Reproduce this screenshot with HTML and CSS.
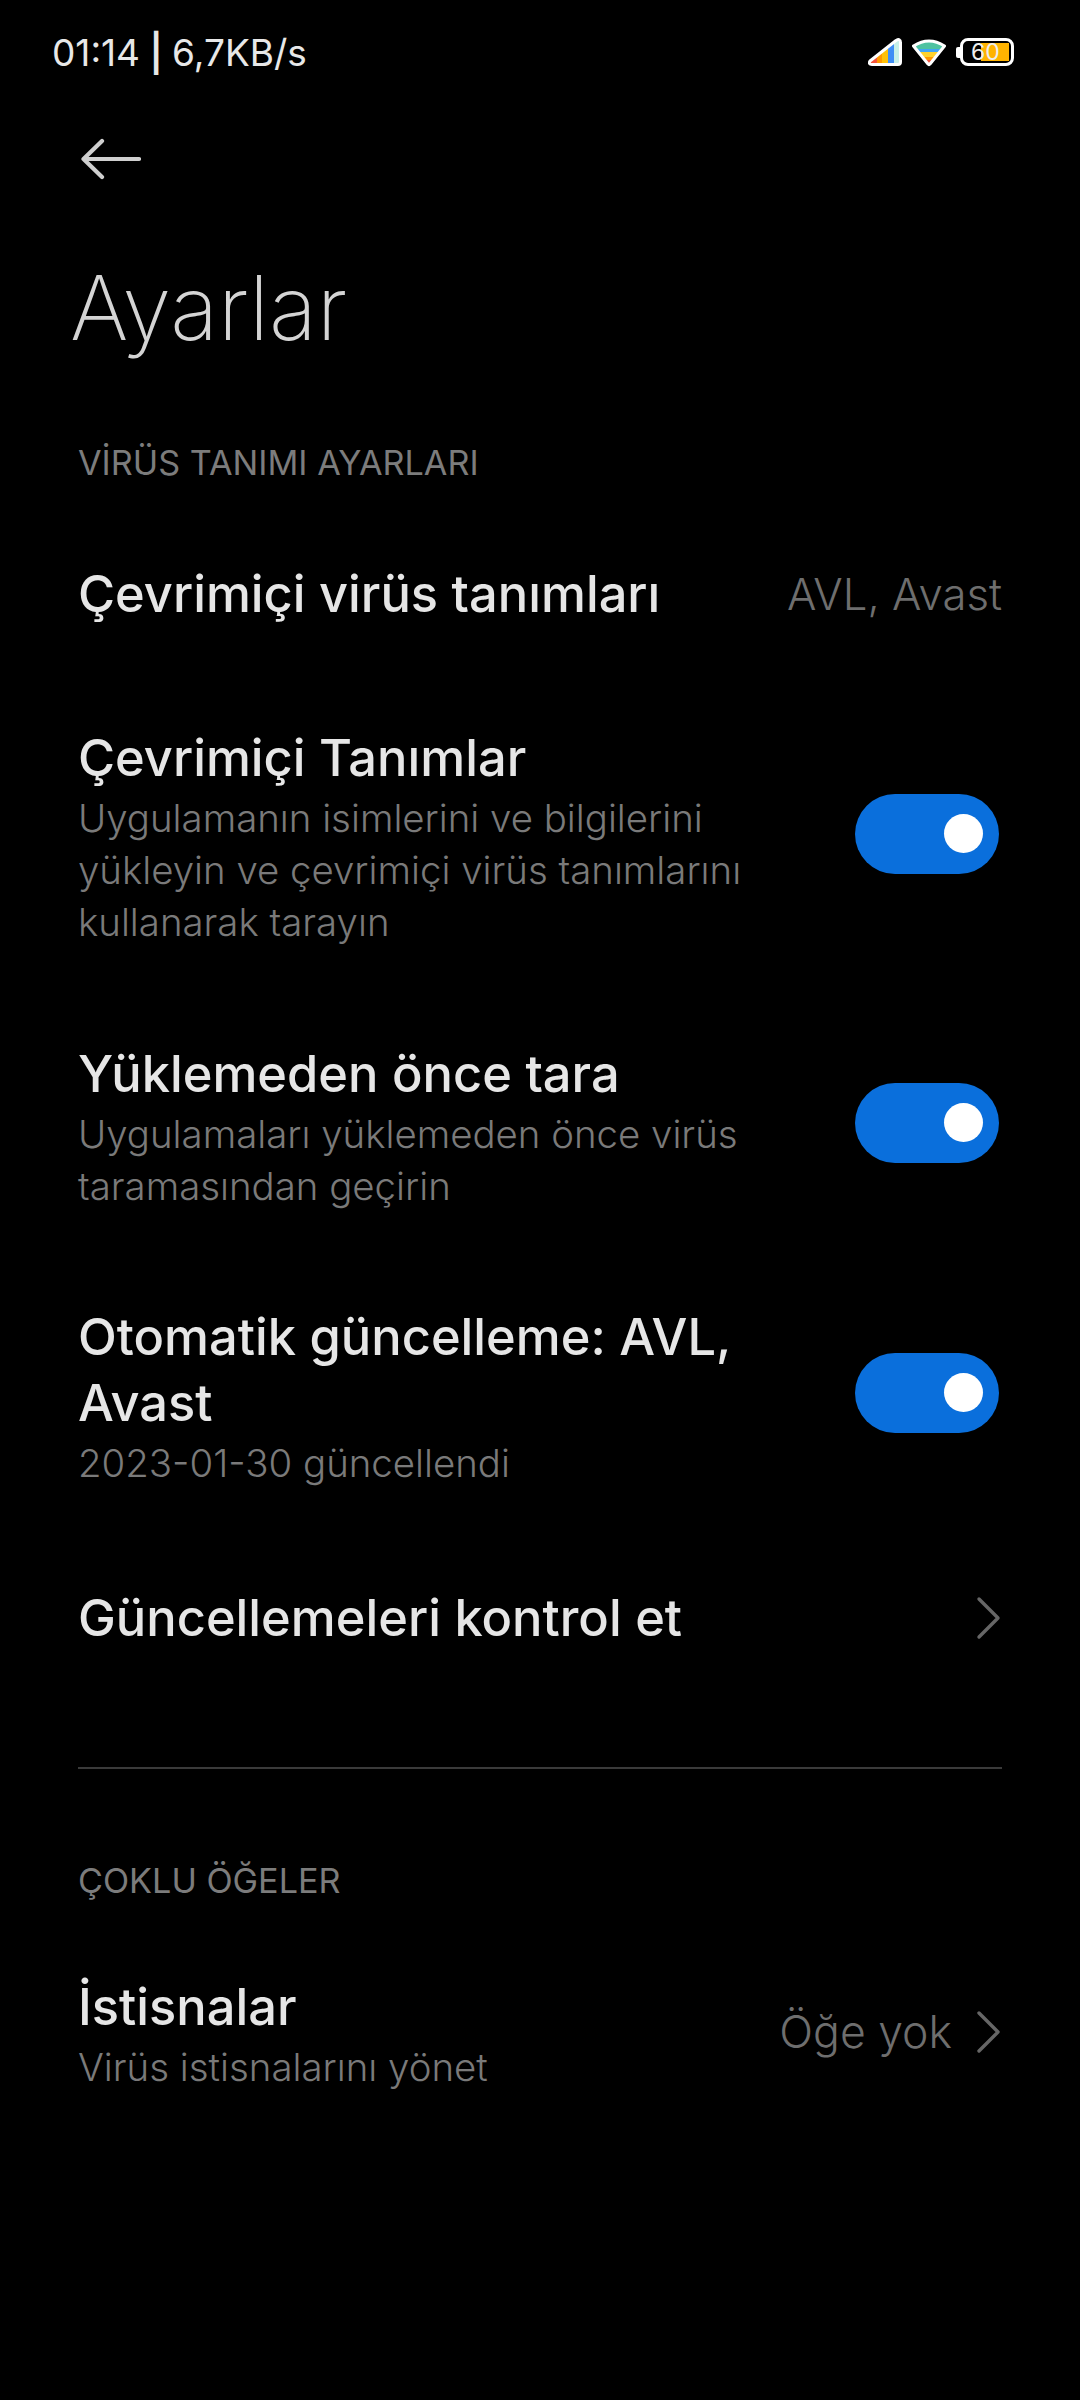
FILE: index.html
```html
<!DOCTYPE html>
<html lang="tr">
<head>
  <meta charset="UTF-8">
  <title>Ayarlar</title>
  <link rel="stylesheet" href="styles.css">
</head>
<body>
  <div class="status-bar">
    <span class="status-text">01:14 <span class="status-sep">|</span> 6,7KB/s</span>
    <div class="status-icons">
      <svg class="icon-signal" width="34" height="30" viewBox="0 0 34 30">
        <defs>
          <clipPath id="sig"><path d="M2 24 L28 3.5 Q32.5 1 32.5 5.5 V25 Q32.5 27.5 30 27.5 H4 Q0 27.5 2 24 Z"/></clipPath>
        </defs>
        <g clip-path="url(#sig)">
          <rect x="0" y="0" width="9" height="30" fill="#f4523b"/>
          <rect x="9" y="0" width="5" height="30" fill="#ff9800"/>
          <rect x="14" y="0" width="6" height="30" fill="#ffc107"/>
          <rect x="20" y="0" width="6" height="30" fill="#3f8ef5"/>
          <rect x="26" y="0" width="8" height="30" fill="#c6f0e8"/>
        </g>
        <path d="M2 24 L28 3.5 Q32.5 1 32.5 5.5 V25 Q32.5 27.5 30 27.5 H4 Q0 27.5 2 24 Z" fill="none" stroke="#fff" stroke-width="3" stroke-linejoin="round"/>
      </svg>
      <svg class="icon-wifi" width="36" height="30" viewBox="0 0 36 30">
        <defs>
          <clipPath id="wf"><path d="M2.5 9 Q18 -1 33.5 9 L19 27 Q18 28.5 17 27 Z"/></clipPath>
        </defs>
        <g clip-path="url(#wf)">
          <rect width="36" height="12" fill="#4fc3a1"/>
          <rect y="12" width="36" height="3" fill="#42a5f5"/>
          <rect y="15" width="36" height="5" fill="#ffd22e"/>
          <rect y="20" width="36" height="3" fill="#ff9800"/>
          <rect y="23" width="36" height="7" fill="#f4523b"/>
        </g>
        <path d="M2.5 9 Q18 -1 33.5 9 L19 27 Q18 28.5 17 27 Z" fill="none" stroke="#fff" stroke-width="3" stroke-linejoin="round"/>
      </svg>
      <div class="battery">
        <span class="battery-cap"></span>
        <div class="battery-body">
          <span class="battery-fill"></span>
          <span class="battery-num">60</span>
        </div>
      </div>
    </div>
  </div>

  <div class="back">
    <svg width="60" height="42" viewBox="0 0 60 42">
      <path d="M2.5 21 H58 M21 3 L2.5 21 L21 39" fill="none" stroke="#cfcfcf" stroke-width="4.2" stroke-linecap="round" stroke-linejoin="round"/>
    </svg>
  </div>

  <h1 class="page-title">Ayarlar</h1>

  <div class="section-label first">VİRÜS TANIMI AYARLARI</div>

  <div class="row row-single row-defs">
    <div class="row-main"><div class="row-title">Çevrimiçi virüs tanımları</div></div>
    <span class="row-value">AVL, Avast</span>
  </div>

  <div class="row row-online">
    <div class="row-main">
      <div class="row-title">Çevrimiçi Tanımlar</div>
      <div class="row-sub">Uygulamanın isimlerini ve bilgilerini yükleyin ve çevrimiçi virüs tanımlarını kullanarak tarayın</div>
    </div>
    <span class="switch"></span>
  </div>

  <div class="row row-scan">
    <div class="row-main">
      <div class="row-title">Yüklemeden önce tara</div>
      <div class="row-sub">Uygulamaları yüklemeden önce virüs taramasından geçirin</div>
    </div>
    <span class="switch"></span>
  </div>

  <div class="row row-auto">
    <div class="row-main">
      <div class="row-title">Otomatik güncelleme: AVL, Avast</div>
      <div class="row-sub">2023-01-30 güncellendi</div>
    </div>
    <span class="switch"></span>
  </div>

  <div class="row row-single row-check">
    <div class="row-main"><div class="row-title">Güncellemeleri kontrol et</div></div>
    <svg class="chevron" width="26" height="44" viewBox="0 0 26 44">
      <path d="M3 3 L22 22 L3 41" fill="none" stroke="#666" stroke-width="3.4" stroke-linecap="round" stroke-linejoin="round"/>
    </svg>
  </div>

  <div class="divider"></div>

  <div class="section-label">ÇOKLU ÖĞELER</div>

  <div class="row row-except">
    <div class="row-main">
      <div class="row-title">İstisnalar</div>
      <div class="row-sub">Virüs istisnalarını yönet</div>
    </div>
    <span class="row-value">Öğe yok</span>
    <svg class="chevron" width="26" height="44" viewBox="0 0 26 44">
      <path d="M3 3 L22 22 L3 41" fill="none" stroke="#666" stroke-width="3.4" stroke-linecap="round" stroke-linejoin="round"/>
    </svg>
  </div>
</body>
</html>
```

FILE: styles.css
```css
* { box-sizing: border-box; }
body {
  margin: 0;
  width: 1080px;
  min-height: 2400px;
  background: #000;
  color: #e6e6e6;
  font-family: Inter, Roboto, "Noto Sans", sans-serif;
}
.status-bar {
  display: flex;
  justify-content: space-between;
  align-items: center;
  height: 52px;
  margin-top: 26px;
  padding: 0 66px 0 52px;
}
.status-text { font-size: 37px; color: #e8e8e8; word-spacing: -1px; }
.status-sep { font-weight: 600; }
.status-icons { display: flex; align-items: center; gap: 9px; }
.battery { display: flex; align-items: center; }
.battery-cap { width: 4px; height: 11px; background: #fff; border-radius: 2px 0 0 2px; }
.battery-body {
  position: relative;
  width: 54px;
  height: 28px;
  border: 3px solid #fff;
  border-radius: 8px;
  overflow: hidden;
}
.battery-fill { position: absolute; left: 18px; top: 2px; bottom: 2px; right: 2px; background: #ffb300; }
.battery-num {
  position: absolute;
  left: 8px;
  top: -2px;
  font-size: 23px;
  line-height: 26px;
  color: #eee;
}
.back { padding: 6px 0 0 81px; height: 62px; margin-top: 54px; }
.back svg { display: block; }
.page-title {
  margin: 59px 0 0 70px;
  font-size: 89px;
  line-height: 110px;
  font-weight: 200;
  color: #d4d4d4;
}
.section-label {
  padding: 0 78px;
  font-size: 34.2px;
  line-height: 44px;
  color: #7c7c7c;
}
.section-label.first { margin-top: 78px; }
.row {
  display: flex;
  align-items: center;
  padding: 0 78px;
}
.row-main { flex: 1; min-width: 0; }
.row-title { font-size: 50.6px; line-height: 66px; font-weight: 500; color: #e6e6e6; }
.row-sub { font-size: 38.4px; line-height: 52px; font-weight: 350; color: #7a7a7a; margin-top: 1px; }
.row-value { font-size: 43.7px; font-weight: 350; color: #6e6e6e; }
.switch {
  position: relative;
  flex: none;
  width: 144px;
  height: 80px;
  margin: 0 3px 7px 0;
  border-radius: 40px;
  background: #0a6fdc;
}
.switch::after {
  content: "";
  position: absolute;
  right: 16px;
  top: 20px;
  width: 39px;
  height: 39px;
  border-radius: 50%;
  background: #fff;
}
.chevron { flex: none; }
.row-defs { margin-top: 76px; height: 66px; }
.row-online { margin-top: 98px; }
.row-online .row-main { padding-right: 100px; }
.row-online .switch { margin-bottom: 5px; }
.row-scan { margin-top: 93px; }
.row-scan .row-main { padding-right: 100px; }
.row-auto { margin-top: 92px; }
.row-auto .row-main { padding-right: 100px; }
.row-check { margin-top: 96px; height: 66px; }
.divider { height: 2px; margin: 116px 78px 0; background: #3a3a3a; }
.section-label + .row-except { margin-top: 71px; }
.divider + .section-label { margin-top: 90px; }
.row-except .row-value { margin: 0 24px 3px 0; font-size: 44.5px; }
.row-except .chevron { margin: 0 0 3px 0; }
```
